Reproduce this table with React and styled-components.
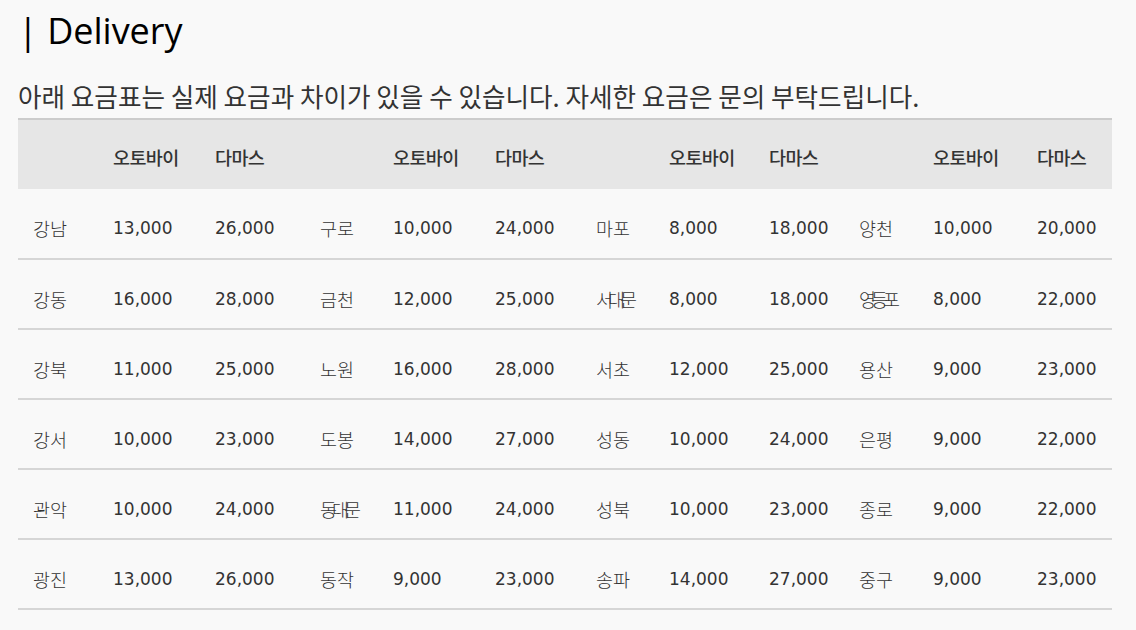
import React from "react";
import styled, { createGlobalStyle } from "styled-components";

const GlobalStyle = createGlobalStyle`
  html, body {
    margin: 0;
    padding: 0;
    background-color: #f9f9f9;
  }
  body {
    font-family: "Noto Sans CJK KR", "Noto Sans", sans-serif;
  }
`;

const StyledPage = styled.div`
  padding: 0 24px 0 18px;
`;

const StyledTitle = styled.h2`
  margin: 0;
  padding-top: 6px;
  font-family: "Open Sans", "Noto Sans", sans-serif;
  font-size: 36px;
  font-weight: 400;
  line-height: 50px;
  color: #000;
`;

const StyledNotice = styled.p`
  margin: 18px 0 0;
  font-size: 25.6px;
  line-height: 44px;
  color: #333;
  white-space: nowrap;
`;

const StyledTable = styled.table`
  width: 1094px;
  border-collapse: collapse;
  table-layout: fixed;
  border-top: 2px solid #cccccc;
`;

const StyledHeaderRow = styled.tr`
  height: 70px;
  background-color: #e6e6e6;
`;

const StyledHeaderCell = styled.th`
  padding: 4px 0 0 15px;
  text-align: left;
  font-size: 18.5px;
  font-weight: 500;
  letter-spacing: -0.6px;
  color: #333;
`;

const StyledTableRow = styled.tr`
  height: 70px;
  border-bottom: 2px solid #d6d6d6;
`;

const StyledTableData = styled.td`
  padding: 9px 0 0 15px;
  font-family: ${(p) =>
    p.$area ? `"Noto Sans CJK KR", sans-serif` : `"DejaVu Sans", sans-serif`};
  font-size: ${(p) => (p.$area ? "18.5px" : "17px")};
  font-weight: ${(p) => (p.$area ? 300 : 400)};
  letter-spacing: ${(p) => (p.$tight ? "-5px" : "0")};
  white-space: nowrap;
  color: #333;
`;

const widths = [80, 102, 105, 73, 102, 101, 73, 100, 90, 74, 104, 90];

const rows = [
  ["강남", "13,000", "26,000", "구로", "10,000", "24,000", "마포", "8,000", "18,000", "양천", "10,000", "20,000"],
  ["강동", "16,000", "28,000", "금천", "12,000", "25,000", "서대문", "8,000", "18,000", "영등포", "8,000", "22,000"],
  ["강북", "11,000", "25,000", "노원", "16,000", "28,000", "서초", "12,000", "25,000", "용산", "9,000", "23,000"],
  ["강서", "10,000", "23,000", "도봉", "14,000", "27,000", "성동", "10,000", "24,000", "은평", "9,000", "22,000"],
  ["관악", "10,000", "24,000", "동대문", "11,000", "24,000", "성북", "10,000", "23,000", "종로", "9,000", "22,000"],
  ["광진", "13,000", "26,000", "동작", "9,000", "23,000", "송파", "14,000", "27,000", "중구", "9,000", "23,000"],
];

const headers = ["", "오토바이", "다마스", "", "오토바이", "다마스", "", "오토바이", "다마스", "", "오토바이", "다마스"];

const App = () => {
  return (
    <StyledPage>
      <GlobalStyle />
      <StyledTitle>| Delivery</StyledTitle>
      <StyledNotice>
        아래 요금표는 실제 요금과 차이가 있을 수 있습니다. 자세한 요금은 문의 부탁드립니다.
      </StyledNotice>
      <StyledTable>
        <colgroup>
          {widths.map((w, i) => (
            <col key={i} style={{ width: w }} />
          ))}
        </colgroup>
        <thead>
          <StyledHeaderRow>
            {headers.map((h, i) => (
              <StyledHeaderCell key={i}>{h}</StyledHeaderCell>
            ))}
          </StyledHeaderRow>
        </thead>
        <tbody>
          {rows.map((row, r) => (
            <StyledTableRow key={r}>
              {row.map((cell, c) => (
                <StyledTableData
                  key={c}
                  $area={c % 3 === 0}
                  $tight={c % 3 === 0 && cell.length > 2}
                >
                  {cell}
                </StyledTableData>
              ))}
            </StyledTableRow>
          ))}
        </tbody>
      </StyledTable>
    </StyledPage>
  );
};

export default App;
